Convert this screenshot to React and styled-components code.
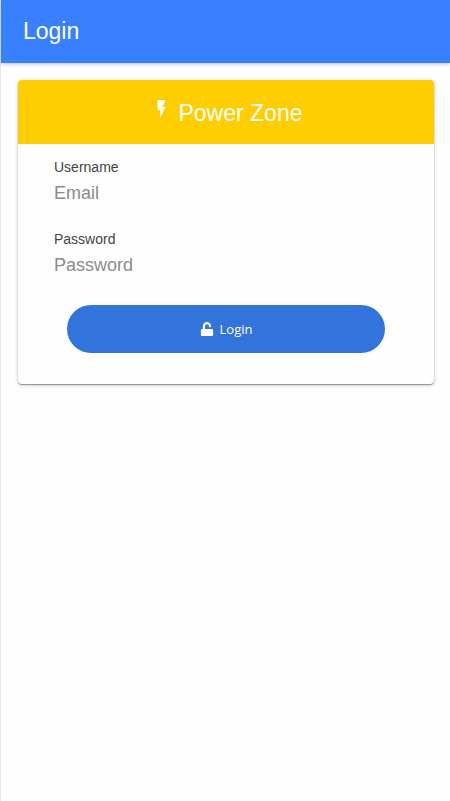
import React, { useState } from "react";

import styled, { createGlobalStyle } from "styled-components";

import { FaUnlock } from "react-icons/fa";

const GlobalStyle = createGlobalStyle`
  * {
    box-sizing: border-box;
  }

  body {
    margin: 0;
    background: #fefefe;
    font-family: "Liberation Sans", Arial, sans-serif;
  }
`;

const Page = styled.div`
  min-height: 100vh;
  border-left: 1px solid #e8e8e8;
`;

const Toolbar = styled.header`
  height: 63px;
  padding: 17px 22px 0;
  background: #3880ff;
  box-shadow: 0 1px 4px rgba(0, 0, 0, 0.25);
`;

const Title = styled.h1`
  margin: 0;
  color: #fff;
  font-size: 23px;
  font-weight: 400;
  line-height: 28px;
`;

const Card = styled.main`
  margin: 17px 16px 16px 17px;
  overflow: hidden;
  background: #fefefe;
  border-radius: 4px;
  box-shadow: 0 1px 1px rgba(0, 0, 0, 0.35), 0 1px 4px rgba(0, 0, 0, 0.2);
`;

const CardHeader = styled.div`
  display: flex;
  justify-content: center;
  height: 64px;
  padding: 19px 0 0 8px;
  gap: 12px;
  background: #ffce00;
  color: #fff;
`;

const CardTitle = styled.h2`
  margin: 0;
  font-size: 23px;
  font-weight: 400;
  line-height: 28px;
`;

const Form = styled.form`
  padding: 14px 36px 31px;
`;

const Field = styled.div`
  display: flex;
  flex-direction: column;
  height: 72px;
`;

const Label = styled.label`
  color: #444;
  font-size: 14px;
  line-height: 18px;
`;

const Input = styled.input`
  width: 100%;
  height: 34px;
  padding: 0;
  border: 0;
  outline: 0;
  background: transparent;
  color: #444;
  font-family: inherit;
  font-size: 18px;

  &::placeholder {
    color: #8c8c8c;
    opacity: 1;
  }
`;

const Actions = styled.div`
  padding: 3px 13px 0;
`;

const Button = styled.button`
  display: flex;
  align-items: center;
  justify-content: center;
  width: 100%;
  height: 48px;
  gap: 6px;
  padding: 0;
  border: 0;
  border-radius: 24px;
  background: #3273dc;
  color: #fff;
  font-family: "Open Sans", "Noto Sans", sans-serif;
  font-size: 13px;
  cursor: pointer;
`;

const FlashIcon = () => (
  <svg width="9" height="20" viewBox="0 0 9 20" fill="currentColor" aria-hidden="true">
    <path d="M.5 1v10H3v8l5.500-11H5.500l3-7z" />
  </svg>
);

const App = () => {
  const [username, setUsername] = useState("");
  const [password, setPassword] = useState("");

  const handleSubmit = (e) => e.preventDefault();

  return (
    <Page>
      <GlobalStyle />
      <Toolbar>
        <Title>Login</Title>
      </Toolbar>
      <Card>
        <CardHeader>
          <FlashIcon />
          <CardTitle>Power Zone</CardTitle>
        </CardHeader>
        <Form onSubmit={handleSubmit}>
          <Field>
            <Label htmlFor="username">Username</Label>
            <Input
              id="username"
              type="text"
              placeholder="Email"
              value={username}
              onChange={(e) => setUsername(e.target.value)}
            />
          </Field>
          <Field>
            <Label htmlFor="password">Password</Label>
            <Input
              id="password"
              type="password"
              placeholder="Password"
              value={password}
              onChange={(e) => setPassword(e.target.value)}
            />
          </Field>
          <Actions>
            <Button type="submit">
              <FaUnlock size={14} />
              Login
            </Button>
          </Actions>
        </Form>
      </Card>
    </Page>
  );
};

export default App;
